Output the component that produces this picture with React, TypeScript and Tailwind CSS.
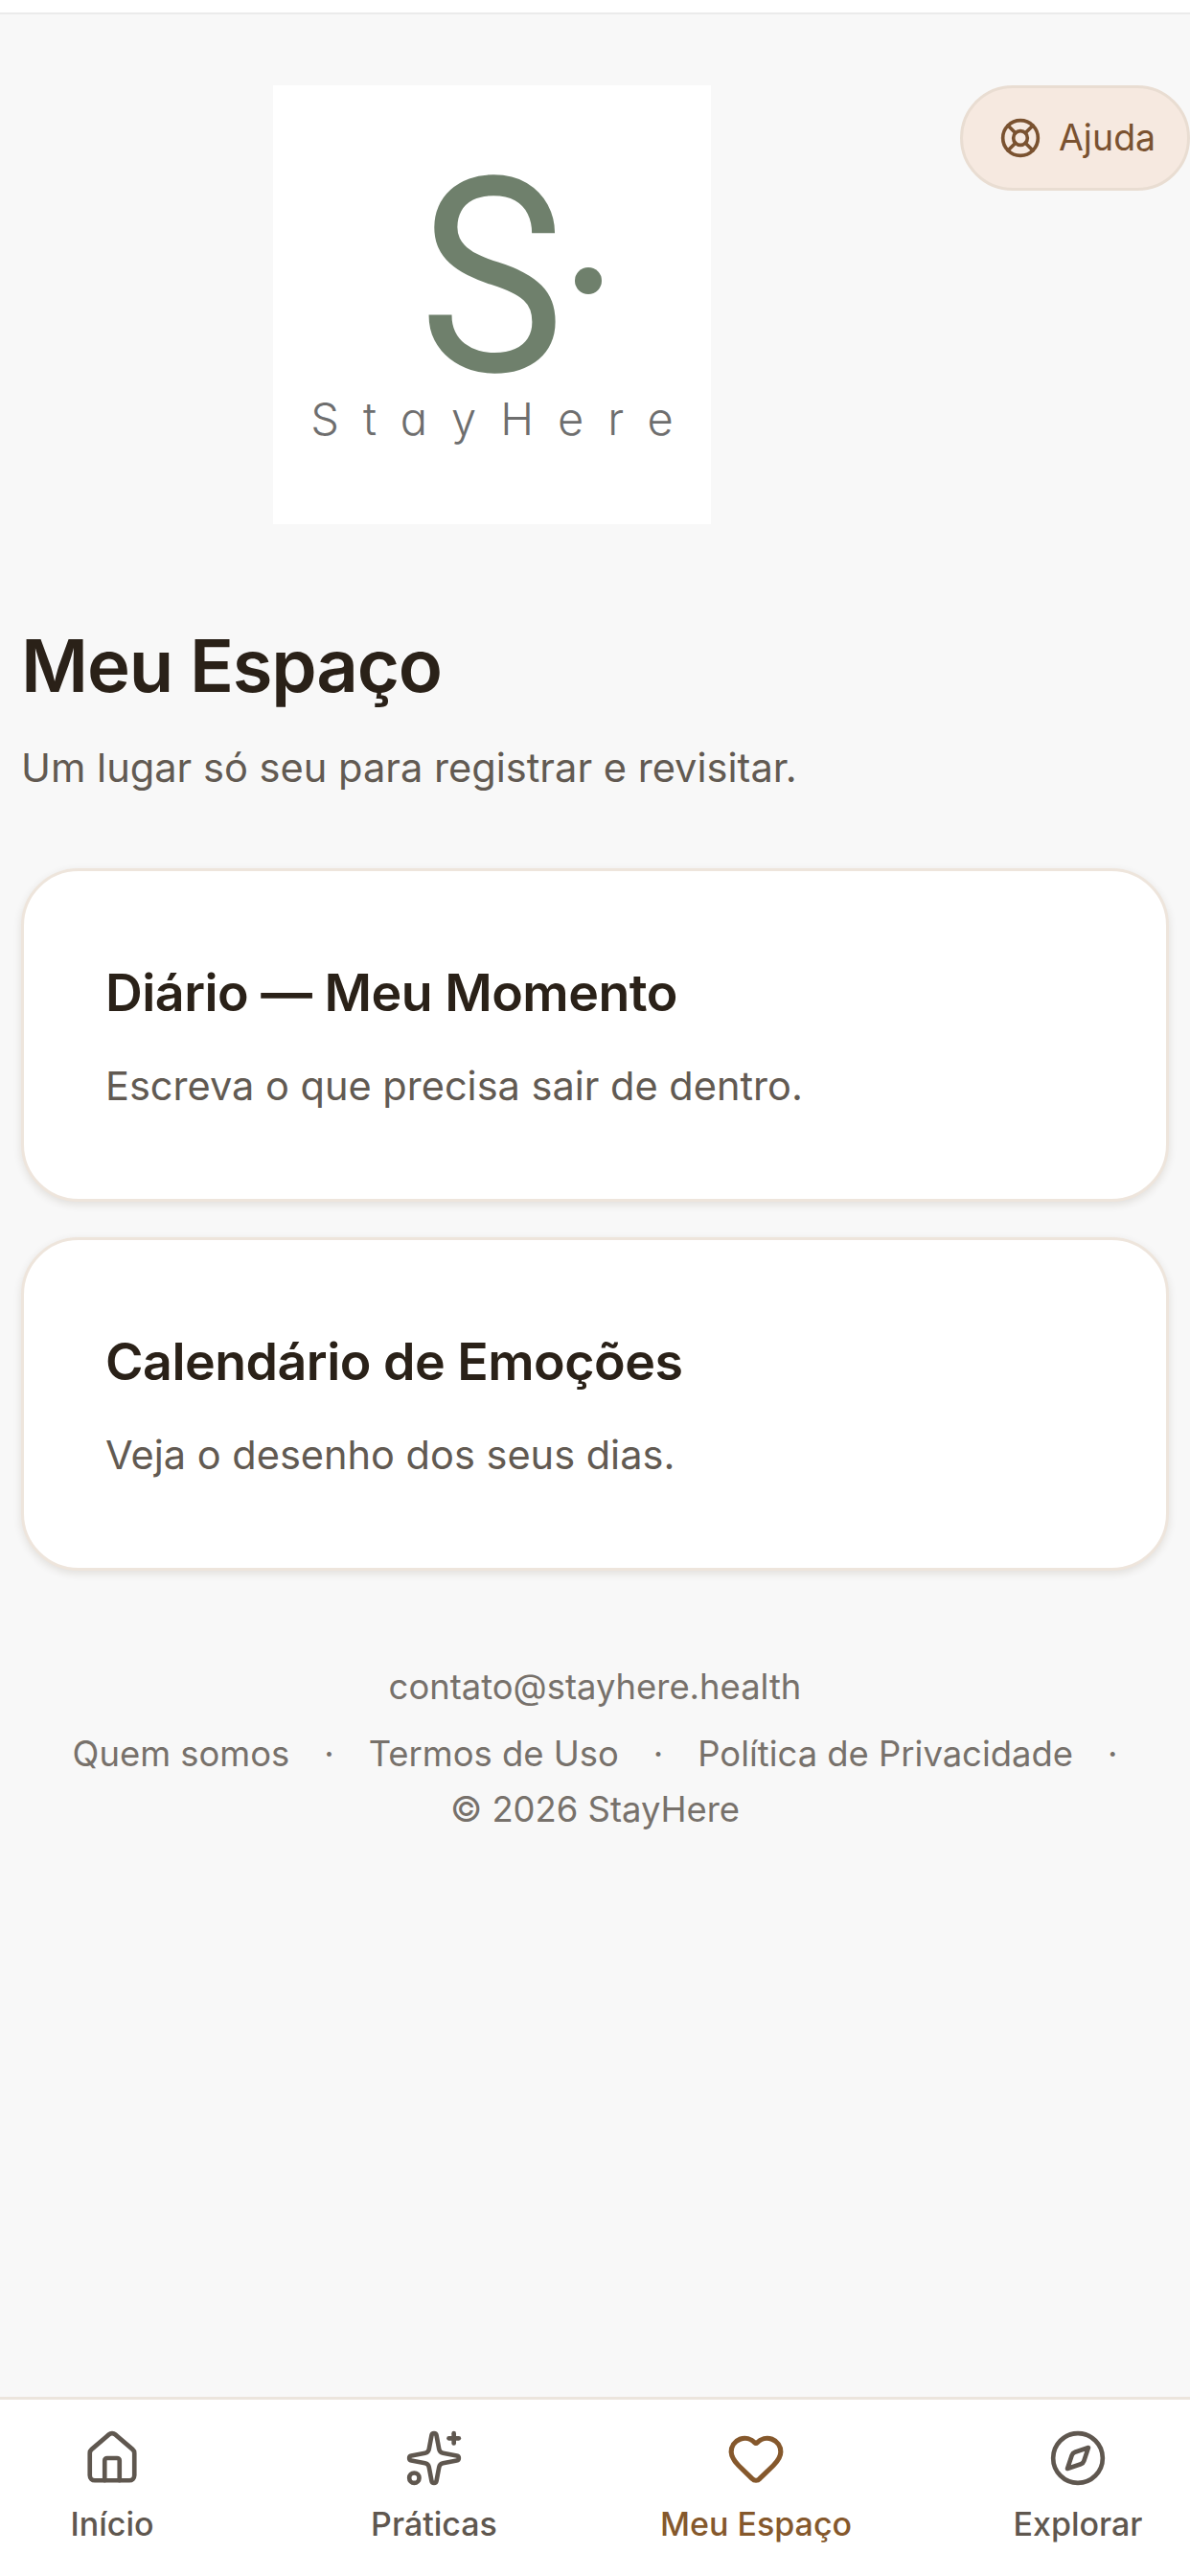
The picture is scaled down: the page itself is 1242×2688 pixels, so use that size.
import { House, Sparkles, Heart, Compass, LifeBuoy } from "lucide-react";

const font = { fontFamily: "Inter, 'Liberation Sans', sans-serif" };

function Card({ title, sub }: { title: string; sub: string }) {
  return (
    <div className="h-[348px] rounded-[60px] border-[3px] border-[#eee5dc] bg-white pl-[85px] pt-[92px] shadow-[0_3px_9px_rgba(60,40,20,0.12)]">
      <h2 className="text-[53.7px] leading-[70px] font-semibold tracking-[-0.5px] text-[#2a2118]">{title}</h2>
      <p className="mt-[32px] text-[41.5px] leading-[60px] text-[#625a52]">{sub}</p>
    </div>
  );
}

function Tab({ icon, label, active }: { icon: React.ReactNode; label: string; active?: boolean }) {
  return (
    <div className={`flex w-[336px] shrink-0 flex-col items-center ${active ? "text-[#85582c]" : "text-[#5f574f]"}`}>
      {icon}
      <span className="mt-[14px] text-[34px] leading-[48px] font-medium">{label}</span>
    </div>
  );
}

export default function App() {
  return (
    <div style={font} className="flex h-[2688px] w-[1242px] flex-col overflow-hidden bg-[#f8f8f8]">
      <div className="h-[15px] shrink-0 border-b-2 border-[#ebebeb] bg-white" />
      <div className="flex flex-1 flex-col">
        <div className="relative flex justify-start pt-[74px] pl-[285px]">
          <div className="flex h-[458px] w-[457px] flex-col items-center bg-white pt-[66px]">
            <div className="flex h-[270px] items-center pl-[30px]">
              <span style={{ fontFamily: "Roboto, sans-serif" }} className="inline-block origin-center scale-x-[0.9] text-[284px] leading-[270px] text-[#6f806c]">S</span>
              <span className="mt-[6px] ml-[2px] h-[28px] w-[28px] rounded-full bg-[#6f806c]" />
            </div>
            <div className="mt-[-18px] pl-[25px] text-[47px] leading-[60px] font-light tracking-[25px] text-[#6e6e6e] [font-feature-settings:'cv11']">StayHere</div>
          </div>
          <div className="absolute top-[74px] right-0 flex h-[110px] w-[240px] items-center gap-[18px] rounded-[55px] border-[3px] border-[#e9ddd2] bg-[#f6e9e0] pl-[38px] text-[#7a5230]">
            <LifeBuoy size={44} strokeWidth={2} />
            <span className="text-[37.5px] leading-[48px] font-normal">Ajuda</span>
          </div>
        </div>
        <div className="px-[22px]">
          <h1 className="mt-[102px] text-[76px] leading-[90px] font-semibold tracking-[-1.2px] text-[#2a2118]">Meu Espaço</h1>
          <p className="mt-[32px] text-[41.6px] leading-[60px] text-[#625a52]">Um lugar só seu para registrar e revisitar.</p>
          <div className="mt-[75px] flex flex-col gap-[37px]">
            <Card title="Diário — Meu Momento" sub="Escreva o que precisa sair de dentro." />
            <Card title="Calendário de Emoções" sub="Veja o desenho dos seus dias." />
          </div>
        </div>
        <div className="mt-[97px] flex flex-col items-center text-[36.4px] text-[#77716b]">
          <div className="leading-[48px]">contato@stayhere.health</div>
          <div className="mt-[22px] flex gap-[36px] leading-[48px]">
            <span>Quem somos</span><span>·</span><span>Termos de Uso</span><span>·</span><span>Política de Privacidade</span><span>·</span>
          </div>
          <div className="mt-[10px] leading-[48px]">© 2026 StayHere</div>
        </div>
      </div>
      <nav className="flex h-[187px] shrink-0 justify-center border-t-[3px] border-[#ece5dd] bg-white pt-[30px]">
        <Tab icon={<House size={62} strokeWidth={1.8} />} label="Início" />
        <Tab icon={<Sparkles size={62} strokeWidth={1.8} />} label="Práticas" />
        <Tab icon={<Heart size={62} strokeWidth={2} />} label="Meu Espaço" active />
        <Tab icon={<Compass size={62} strokeWidth={1.8} />} label="Explorar" />
      </nav>
    </div>
  );
}
